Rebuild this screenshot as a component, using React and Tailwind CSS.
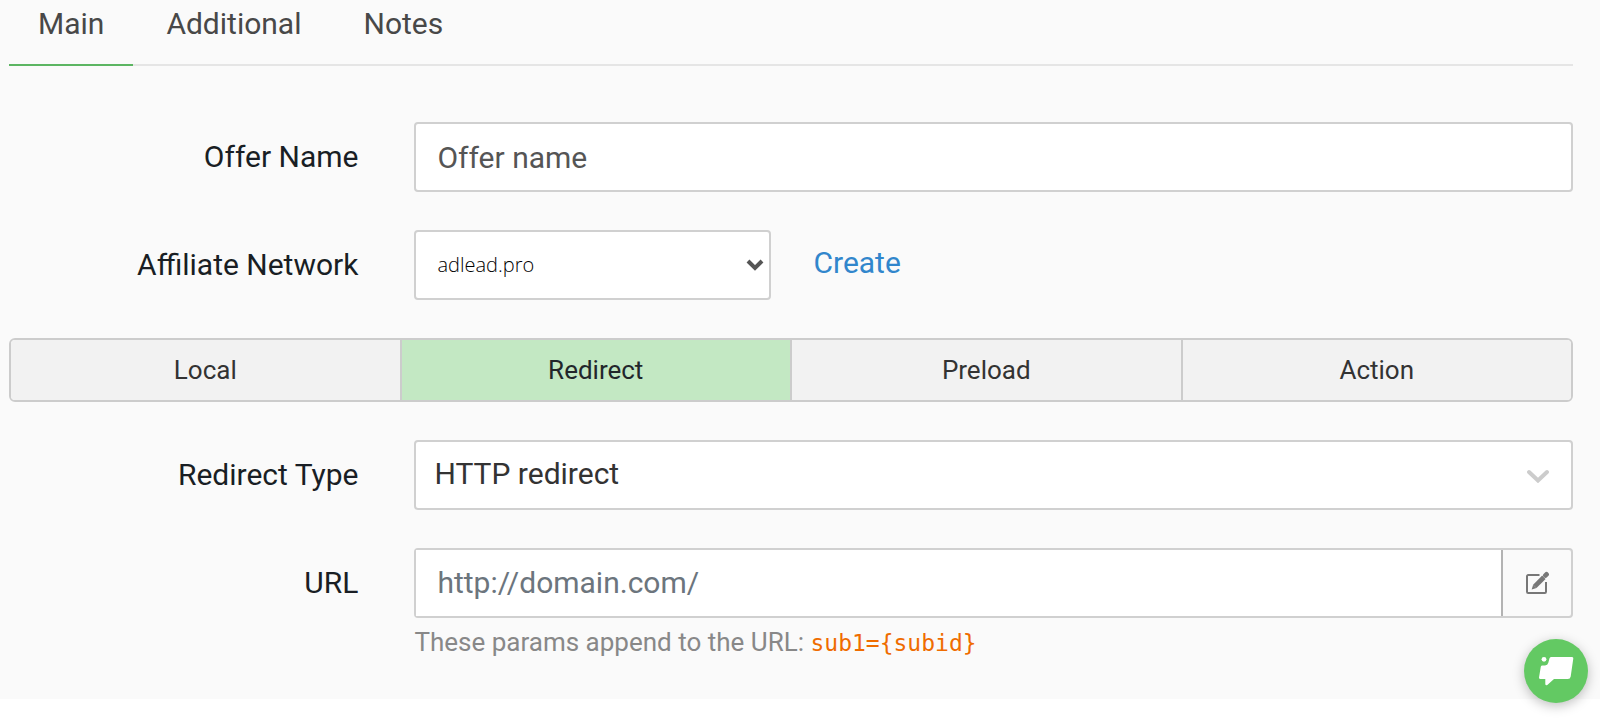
import React, { useState } from 'react';

const TABS = ['Main', 'Additional', 'Notes'];
const MODES = ['Local', 'Redirect', 'Preload', 'Action'];

const FormRow = ({ label, htmlFor, hint, children }) => (
  <div className="grid grid-cols-[7fr_20fr] items-center">
    <label htmlFor={htmlFor} className="pr-14 text-right text-[#191e24]">
      {label}
    </label>
    {children}
    {hint}
  </div>
);

const App = () => {
  const [activeTab, setActiveTab] = useState('Main');
  const [mode, setMode] = useState('Redirect');
  const [name, setName] = useState('Offer name');
  const [url, setUrl] = useState('');

  return (
    <div className="min-h-screen bg-white font-[Roboto,sans-serif] text-[30px] leading-[48px]">
      <main className="bg-[#fafafa] pl-[9px] pr-[27px] pb-8">
        {/* Tabs */}
        <nav className="flex gap-1 border-b-2 border-[#e5e5e5] text-[#484848]">
          {TABS.map((tab) => (
            <button
              key={tab}
              type="button"
              onClick={() => setActiveTab(tab)}
              className={`-mb-[2px] border-b-2 px-[29px] pb-4 ${
                activeTab === tab ? 'border-[#5cb562]' : 'border-transparent'
              }`}
            >
              {tab}
            </button>
          ))}
        </nav>

        <form className="flex flex-col gap-[38px] pt-14" onSubmit={(e) => e.preventDefault()}>
          <FormRow label="Offer Name" htmlFor="offer-name">
            <input
              id="offer-name"
              type="text"
              value={name}
              onChange={(e) => setName(e.target.value)}
              className="h-[70px] w-full rounded border-2 border-[#d0d0d0] bg-white px-[21px] text-[#555]"
            />
          </FormRow>

          <FormRow label="Affiliate Network" htmlFor="network">
            <div className="flex items-center gap-[42px]">
              <div className="grid w-[357px] items-center">
                <select
                  id="network"
                  className="col-start-1 row-start-1 h-[70px] w-full appearance-none rounded border-2 border-[#d0d0d0] bg-white px-[21px] font-['Open_Sans',sans-serif] text-[20px] font-light text-black"
                >
                  <option>adlead.pro</option>
                </select>
                <svg
                  className="pointer-events-none col-start-1 row-start-1 mr-[7px] h-3 w-[18px] justify-self-end"
                  viewBox="0 0 18 12"
                  fill="none"
                  stroke="#555"
                  strokeWidth="4"
                >
                  <path d="M2 2l7 7 7-7" />
                </svg>
              </div>
              <a href="#create" className="pb-1 text-[#3186cc]">
                Create
              </a>
            </div>
          </FormRow>

          {/* Offer mode */}
          <div className="flex h-16 divide-x-2 divide-[#ccc] overflow-hidden rounded-md border-2 border-[#ccc] text-[26px]">
            {MODES.map((item) => (
              <button
                key={item}
                type="button"
                onClick={() => setMode(item)}
                className={`flex flex-1 items-center justify-center ${
                  mode === item ? 'bg-[#c3e8c3] text-[#22262b]' : 'bg-[#f2f2f2] text-[#333]'
                }`}
              >
                {item}
              </button>
            ))}
          </div>

          <FormRow label="Redirect Type" htmlFor="redirect-type">
            <div className="grid items-center">
              <select
                id="redirect-type"
                className="col-start-1 row-start-1 h-[70px] w-full appearance-none rounded border-2 border-[#d0d0d0] bg-white px-[18px] pb-[2px] text-[#333]"
              >
                <option>HTTP redirect</option>
              </select>
              <svg
                className="pointer-events-none col-start-1 row-start-1 mr-6 h-4 w-[22px] justify-self-end"
                viewBox="0 0 22 16"
                fill="none"
                stroke="#ccc"
                strokeWidth="4"
                strokeLinecap="round"
              >
                <path d="M2 5l9 8.500 9-8.500" />
              </svg>
            </div>
          </FormRow>

          <FormRow
            label="URL"
            htmlFor="url"
            hint={
              <p className="col-start-2 text-[26px] text-[#888]">
                These params append to the URL:{' '}
                <code className="font-['DejaVu_Sans_Mono',monospace] text-[23px] text-[#ef6c00]">{'sub1={subid}'}</code>
              </p>
            }
          >
            <div className="flex h-[70px] rounded border-2 border-[#d0d0d0]">
              <input
                id="url"
                type="text"
                placeholder="http://domain.com/"
                value={url}
                onChange={(e) => setUrl(e.target.value)}
                className="min-w-0 flex-1 border-r-2 border-[#b3b3b3] bg-white px-[21px] placeholder:text-[#6c757d]"
              />
              <button type="button" aria-label="Edit URL" className="flex w-[68px] items-center justify-center">
                <svg className="h-6 w-6" viewBox="0 0 24 24" fill="none" stroke="#777">
                  <path
                    d="M14.500 4H3.200A1.200 1.200 0 0 0 2 5.200v15.600A1.200 1.200 0 0 0 3.200 22h16.600a1.200 1.200 0 0 0 1.200-1.200V11"
                    strokeWidth="2"
                  />
                  <path d="M9.800 15.400L18.900 6.300" strokeWidth="4.800" />
                  <path d="M20.500 4.400l1-1" strokeWidth="4.800" strokeLinecap="round" />
                  <path d="M8.100 13.700l3.400 3.400L6.700 18.500z" fill="#777" stroke="none" />
                </svg>
              </button>
            </div>
          </FormRow>
        </form>
      </main>

      <button
        type="button"
        aria-label="Open chat"
        className="fixed right-3 bottom-4 flex h-16 w-16 items-center justify-center rounded-full bg-[#63c963] shadow-[0_3px_12px_rgba(0,0,0,0.25)]"
      >
        <svg className="h-[30px] w-[36px]" viewBox="0 0 36 30" fill="#fff">
          <circle cx="6" cy="3.300" r="2.400" />
          <path d="M13 1h21a1.300 1.300 0 0 1 1.300 1.500l-2.600 18a3 3 0 0 1-3 2.500H16l-6.700 5.900a1.200 1.200 0 0 1-2-1V23H2.200A1.200 1.200 0 0 1 1 21.600L2.800 10.800a1.600 1.600 0 0 1 1.600-1.300H7a3.500 3.500 0 0 0 3.300-2.700l1.200-4.500A1.700 1.700 0 0 1 13 1z" />
        </svg>
      </button>
    </div>
  );
};

export default App;
